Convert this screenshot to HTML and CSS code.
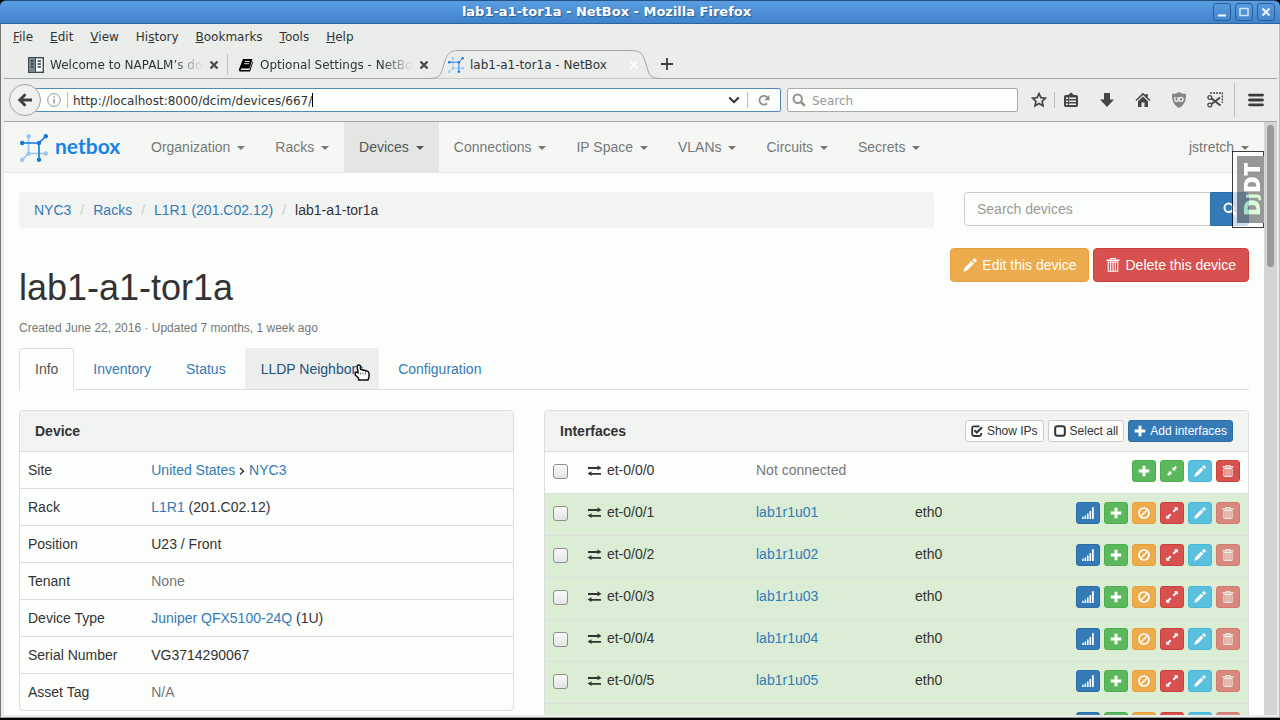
FILE: index.html
```
<!DOCTYPE html>
<html lang="en">
<head>
    <meta charset="UTF-8">
    <meta name="viewport" content="width=device-width, initial-scale=1.0">
    <title>lab1-a1-tor1a - NetBox</title>
    <link rel="stylesheet" href="styles.css">
</head>
<body>
    <svg class="sprite" aria-hidden="true">
        <symbol id="plus" viewBox="0 0 12 12"><path d="M4.500.7h3v3.800h3.800v3H7.500v3.800h-3V7.500H.7v-3h3.800z"/></symbol>
        <symbol id="pencil" viewBox="0 0 12 12"><path d="M.3 11.700l1-3.200 5.900-5.900 2.200 2.200-5.900 5.900zM8 1.800L9.300.5c.4-.4.8-.4 1.200 0l1 1c.4.4.4.8 0 1.200L10.200 4z"/></symbol>
        <symbol id="trash" viewBox="0 0 12 12"><path d="M.5 1.300h3.200V0h4.600v1.300h3.200v1.300H.5zM4.700.8v.6h2.600V.8z" fill-rule="evenodd"/><path d="M1.900 3.500h8.200v7.900H1.900zM4 3.500v8M6 3.500v8M8 3.500v8" fill="none" stroke="currentColor" stroke-width=".9"/></symbol>
        <symbol id="signal" viewBox="0 0 12 12"><path d="M.2 9.700h1.600V12H.2zM2.600 8.600h1.600V12H2.600zM5 6.500h1.600V12H5zM7.500 4h1.600v8H7.500zM10 .3h1.800V12H10z"/></symbol>
        <symbol id="ban" viewBox="0 0 12 12"><path d="M3 9l6-6" fill="none" stroke="currentColor" stroke-width="1.600"/><circle cx="6" cy="6" r="5" fill="none" stroke="currentColor" stroke-width="1.700"/></symbol>
        <symbol id="expand" viewBox="0 0 12 12"><path d="M8 .2h3.800V4l-1.200-1.200L8 5.400 6.600 4l2.600-2.600zM.2 8l1.200 1.200L4 6.600 5.400 8l-2.600 2.600L4 11.800H.2z"/></symbol>
        <symbol id="shrink" viewBox="0 0 12 12"><path d="M6.500 2.200v3.300h3.300L8.900 4.600l2-2-1.500-1.500-2 2zM5.500 9.800V6.500H2.200l.9.9-2 2 1.500 1.500 2-2z"/></symbol>
        <symbol id="transfer" viewBox="0 0 15 12"><path d="M1 3h9.500V1.300L14.500 4l-4 2.200V5H1zM14 9H4.500V7.300L.5 9.500l4 2.500v-1.200H14z"/></symbol>
        <symbol id="check" viewBox="0 0 12 12"><path d="M8.500 1.400H3A1.800 1.800 0 0 0 1.200 3.200v6A1.800 1.800 0 0 0 3 11h5.400a1.800 1.800 0 0 0 1.800-1.800V8" fill="none" stroke="currentColor" stroke-width="1.800"/><path d="M3.500 5.200l2.300 2.300 5.300-5.300" fill="none" stroke="currentColor" stroke-width="2"/></symbol>
        <symbol id="uncheck" viewBox="0 0 12 12"><rect x="1.200" y="1.200" width="9.600" height="9.600" rx="2" fill="none" stroke="currentColor" stroke-width="2"/></symbol>
        <symbol id="mag" viewBox="0 0 14 14"><circle cx="5.700" cy="5.700" r="4.200" fill="none" stroke="currentColor" stroke-width="2"/><path d="M8.800 8.800l4 4" stroke="currentColor" stroke-width="2.600"/></symbol>
        <symbol id="netbox" viewBox="0 0 28 28">
            <g fill="#9bc5f2"><path d="M8.500 3v16.500H26M8.500 19.500L2 26" fill="none" stroke="#9bc5f2" stroke-width="1.600"/><circle cx="8.700" cy="2.300" r="2.200"/><circle cx="8.700" cy="19.500" r="2.200"/><circle cx="25.800" cy="19.500" r="2.200"/><circle cx="2.200" cy="25.800" r="2.200"/></g>
            <g fill="#1479dc"><path d="M2 9h17v17M19 9l7-7" fill="none" stroke="#1479dc" stroke-width="1.600"/><circle cx="2.200" cy="9" r="2.200"/><circle cx="19" cy="9" r="2.200"/><circle cx="25.800" cy="2.200" r="2.200"/><circle cx="19" cy="25.800" r="2.200"/></g>
        </symbol>
        <symbol id="close" viewBox="0 0 10 10"><path d="M1.500 1.500l7 7M8.500 1.500l-7 7" fill="none" stroke="currentColor" stroke-width="2.400"/></symbol>
    </svg>

    <div class="window">
        <header class="titlebar">
            <span class="window-title">lab1-a1-tor1a - NetBox - Mozilla Firefox</span>
            <div class="window-buttons">
                <button aria-label="Minimize"><svg viewBox="0 0 16 16"><path d="M4 11.500h8" stroke="#fff" stroke-width="2"/></svg></button>
                <button aria-label="Maximize"><svg viewBox="0 0 16 16"><path d="M4 4.500h8v7H4z" fill="none" stroke="#cfe4f9" stroke-width="1.600"/></svg></button>
                <button aria-label="Close"><svg viewBox="0 0 16 16"><path d="M4.500 4.500l7 7M11.500 4.500l-7 7" stroke="#e9f3fd" stroke-width="2.200"/></svg></button>
            </div>
        </header>

        <div class="frame">
            <div class="menubar">
                <button><u>F</u>ile</button>
                <button><u>E</u>dit</button>
                <button><u>V</u>iew</button>
                <button>Hi<u>s</u>tory</button>
                <button><u>B</u>ookmarks</button>
                <button><u>T</u>ools</button>
                <button><u>H</u>elp</button>
            </div>

            <div class="tabstrip">
                <div class="tab">
                    <svg class="favicon" viewBox="0 0 16 16"><rect x=".7" y=".7" width="14.600" height="14.600" fill="#fff" stroke="#3c494d" stroke-width="1.400"/><path d="M1 1h6v14H1z" fill="#75898f"/><path d="M7.500 1v14" stroke="#3c494d"/><path d="M3 4h2.500M3 7h2.500M3 10h2.500M9.500 4H13M9.500 7H13M9.500 10H13" stroke="#2c383c" stroke-width="1.400"/></svg>
                    <span class="tab-label faded">Welcome to NAPALM’s do</span>
                    <button class="tab-close" aria-label="Close tab"><svg><use href="#close"/></svg></button>
                </div>
                <div class="tab divided">
                    <svg class="favicon" viewBox="0 0 16 16"><path d="M5 2h9.500l-3 9.500H3.500L2.500 13h9l3-8.500.6.800-3 9.200H2.300C1 14.500.6 13 1.200 11.800z" fill="#000"/><path d="M6.700 4.500h5M6 6.700h5" stroke="#ddd"/></svg>
                    <span class="tab-label faded">Optional Settings - NetBo</span>
                    <button class="tab-close" aria-label="Close tab"><svg><use href="#close"/></svg></button>
                </div>
                <div class="tab active">
                    <svg class="tab-shape" viewBox="0 0 232 29" preserveAspectRatio="none"><path d="M0 28.500C12 28.500 12 24 15 14S20 .5 30 .5H202C212 .5 214 4 217 14S220 28.500 232 28.500" fill="#ebedea" stroke="#a3a5a2"/></svg>
                    <svg class="favicon"><use href="#netbox"/></svg>
                    <span class="tab-label">lab1-a1-tor1a - NetBox</span>
                    <button class="tab-close light" aria-label="Close tab"><svg><use href="#close"/></svg></button>
                </div>
                <button class="new-tab" aria-label="New tab"><svg viewBox="0 0 12 12"><path d="M6 0v12M0 6h12" stroke="#3c3e3b" stroke-width="1.800"/></svg></button>
            </div>

            <div class="toolbar">
                <button class="back" aria-label="Back"><svg viewBox="0 0 16 16"><path d="M15 8H3M8.500 2.200L2.700 8l5.800 5.800" fill="none" stroke="#3f4240" stroke-width="2.800"/></svg></button>
                <div class="urlbar">
                    <svg class="info" viewBox="0 0 14 14"><circle cx="7" cy="7" r="6.300" fill="none" stroke="#969896"/><path d="M7 6v4.500M7 3.300v1.500" stroke="#969896" stroke-width="1.500"/></svg>
                    <span class="line"></span>
                    <input class="url" type="text" size="36" aria-label="Address" value="http://localhost:8000/dcim/devices/667/">
                    <span class="text-caret"></span>
                    <button class="history" aria-label="Show history"><svg viewBox="0 0 12 12"><path d="M1.300 3.500L6 8.200l4.700-4.700" fill="none" stroke="#2d2f2d" stroke-width="2"/></svg></button>
                    <span class="line"></span>
                    <button class="reload" aria-label="Reload"><svg viewBox="0 0 12 12"><path d="M9 9.300A4.400 4.400 0 1 1 9.500 3.700" fill="none" stroke="#8f928f" stroke-width="1.800"/><path d="M11.500.8v5.400H6.200z" fill="#8f928f"/></svg></button>
                </div>
                <label class="searchbar">
                    <svg><use href="#mag"/></svg>
                    <input type="text" placeholder="Search" aria-label="Search">
                </label>
                <button class="tool star" aria-label="Bookmark"><svg viewBox="0 0 16 16"><path d="M8 1.600l1.900 4.100 4.500.5-3.300 3.100.9 4.500L8 11.500l-4 2.300.9-4.500L1.600 6.200l4.500-.5z" fill="none" stroke="#434643" stroke-width="1.700"/></svg></button>
                <span class="line"></span>
                <div class="tool-group">
                    <button class="tool" aria-label="Show bookmarks"><svg viewBox="0 0 16 16"><path d="M2.800 3h10.400A1.800 1.800 0 0 1 15 4.800v8.400a1.800 1.800 0 0 1-1.800 1.800H2.800A1.800 1.800 0 0 1 1 13.200V4.800A1.800 1.800 0 0 1 2.800 3zM5 3L8 .5 11 3z" fill="#434643"/><path d="M3 6.200h2M6 6.200h7M3 9.200h2M6 9.200h7M3 12.200h2M6 12.200h7" stroke="#ebedea" stroke-width="1.500"/></svg></button>
                    <button class="tool" aria-label="Downloads"><svg viewBox="0 0 16 16"><path d="M5 1h6v6.500h4L8 15 1 7.500h4z" fill="#434643"/></svg></button>
                    <button class="tool" aria-label="Home"><svg viewBox="0 0 16 16"><path d="M8 .8l2.500 2.400V2h2.200v3.400L15.500 8l-1 1L8 3 1.500 9l-1-1z" fill="#434643"/><path d="M3 9.200l5-4.600 5 4.600V15H9.500v-4.500h-3V15H3z" fill="#434643"/></svg></button>
                    <button class="tool" aria-label="uBlock"><svg viewBox="0 0 16 16"><path d="M8 0c2 1.300 4 1.800 7 1.800 0 6.500-1 11-7 14.200C2 12.800 1 8.300 1 1.800 4 1.800 6 1.300 8 0z" fill="#858785"/><path d="M4 5v3q0 1.500 1.500 1.500T7 8V5M7 8.500V5" fill="none" stroke="#f4f4f4" stroke-width="1.300"/><circle cx="10" cy="7.300" r="2" fill="none" stroke="#f4f4f4" stroke-width="1.300"/></svg></button>
                    <button class="tool" aria-label="Screenshot"><svg viewBox="0 0 16 16"><path d="M3 1h12.500v10" fill="none" stroke="#434643" stroke-width="1.600" stroke-dasharray="2 1"/><path d="M4.500 6.500l9 7M4.500 12L13 5.500" stroke="#434643" stroke-width="1.900"/><circle cx="2.800" cy="5.500" r="1.900" fill="none" stroke="#434643" stroke-width="1.300"/><circle cx="2.800" cy="13" r="1.900" fill="none" stroke="#434643" stroke-width="1.300"/></svg></button>
                </div>
                <span class="line tall"></span>
                <button class="tool menu" aria-label="Open menu"><svg viewBox="0 0 16 16"><path d="M1.500 3.200h13M1.500 8h13M1.500 12.800h13" stroke="#3c3e3b" stroke-width="2.800" stroke-linecap="round"/></svg></button>
            </div>

            <div class="viewport">
                <div class="page">
                    <nav class="navbar">
                        <a class="brand" href="#"><svg><use href="#netbox"/></svg><span>netbox</span></a>
                        <a class="nav-link" href="#">Organization <span class="caret"></span></a>
                        <a class="nav-link" href="#">Racks <span class="caret"></span></a>
                        <a class="nav-link active" href="#">Devices <span class="caret"></span></a>
                        <a class="nav-link" href="#">Connections <span class="caret"></span></a>
                        <a class="nav-link" href="#">IP Space <span class="caret"></span></a>
                        <a class="nav-link" href="#">VLANs <span class="caret"></span></a>
                        <a class="nav-link" href="#">Circuits <span class="caret"></span></a>
                        <a class="nav-link" href="#">Secrets <span class="caret"></span></a>
                        <a class="nav-link right" href="#">jstretch <span class="caret"></span></a>
                    </nav>

                    <main class="container">
                        <div class="top-row">
                            <ol class="breadcrumb">
                                <li><a href="#">NYC3</a></li>
                                <li><a href="#">Racks</a></li>
                                <li><a href="#">L1R1 (201.C02.12)</a></li>
                                <li>lab1-a1-tor1a</li>
                            </ol>
                            <form class="search">
                                <input type="text" placeholder="Search devices" aria-label="Search devices">
                                <button type="button" aria-label="Search"><svg><use href="#mag"/></svg></button>
                            </form>
                        </div>

                        <div class="device-head">
                            <div>
                                <h1>lab1-a1-tor1a</h1>
                                <p class="meta">Created June 22, 2016 · Updated 7 months, 1 week ago</p>
                            </div>
                            <div class="actions">
                                <button class="btn warning"><svg><use href="#pencil"/></svg> Edit this device</button>
                                <button class="btn danger"><svg><use href="#trash"/></svg> Delete this device</button>
                            </div>
                        </div>

                        <div class="tabs">
                            <a class="active" href="#">Info</a>
                            <a href="#">Inventory</a>
                            <a href="#">Status</a>
                            <a class="hover" href="#">LLDP Neighbors<svg class="pointer" viewBox="0 0 16 17"><path d="M4.500 1C6 1 6.500 2 6.500 3v2.500h2l.5.800h2l.5.700H13q2 .5 2 2.500V13l-1 3H4.500v-2L1.200 11V8.200h2L4.200 9 3.200 3C3 2 3.500 1 4.500 1z" fill="#fff" stroke="#111" stroke-width="1.500" stroke-linejoin="round"/><path d="M6.500 8.500v2M9 8.500v2M11.500 8.500v2" stroke="#777"/></svg></a>
                            <a href="#">Configuration</a>
                        </div>

                        <div class="panels">
                            <section class="panel">
                                <div class="panel-heading"><strong>Device</strong></div>
                                <table class="attrs">
                                    <tr><td>Site</td><td><a href="#">United States</a> <svg class="angle" viewBox="0 0 6 10"><path d="M1 2l3.500 3.200L1 8.500" fill="none" stroke="#333" stroke-width="1.400"/></svg> <a href="#">NYC3</a></td></tr>
                                    <tr><td>Rack</td><td><a href="#">L1R1</a> (201.C02.12)</td></tr>
                                    <tr><td>Position</td><td>U23 / Front</td></tr>
                                    <tr><td>Tenant</td><td class="muted">None</td></tr>
                                    <tr><td>Device Type</td><td><a href="#">Juniper QFX5100-24Q</a> (1U)</td></tr>
                                    <tr><td>Serial Number</td><td>VG3714290067</td></tr>
                                    <tr><td>Asset Tag</td><td class="muted">N/A</td></tr>
                                </table>
                            </section>

                            <section class="panel">
                                <div class="panel-heading">
                                    <strong>Interfaces</strong>
                                    <div class="btn-row">
                                        <button class="btn xs default"><svg><use href="#check"/></svg> Show IPs</button>
                                        <button class="btn xs default"><svg><use href="#uncheck"/></svg> Select all</button>
                                        <button class="btn xs primary"><svg><use href="#plus"/></svg> Add interfaces</button>
                                    </div>
                                </div>
                                <table class="interfaces">
                                    <colgroup><col class="col-check"><col class="col-name"><col class="col-peer"><col></colgroup>
                                    <tr>
                                        <td><input type="checkbox" aria-label="et-0/0/0"></td>
                                        <td><svg class="transfer"><use href="#transfer"/></svg> et-0/0/0</td>
                                        <td class="muted">Not connected</td>
                                        <td><div class="cell"><span></span><div class="btn-row">
                                            <button class="btn xs success" aria-label="Add IP"><svg><use href="#plus"/></svg></button>
                                            <button class="btn xs success" aria-label="Connect"><svg><use href="#shrink"/></svg></button>
                                            <button class="btn xs info-btn" aria-label="Edit"><svg><use href="#pencil"/></svg></button>
                                            <button class="btn xs danger" aria-label="Delete"><svg><use href="#trash"/></svg></button>
                                        </div></div></td>
                                    </tr>
                                    <tr class="connected">
                                        <td><input type="checkbox" aria-label="et-0/0/1"></td>
                                        <td><svg class="transfer"><use href="#transfer"/></svg> et-0/0/1</td>
                                        <td><a href="#">lab1r1u01</a></td>
                                        <td><div class="cell"><span>eth0</span><div class="btn-row">
                                            <button class="btn xs primary" aria-label="Graphs"><svg><use href="#signal"/></svg></button>
                                            <button class="btn xs success" aria-label="Add IP"><svg><use href="#plus"/></svg></button>
                                            <button class="btn xs warning" aria-label="Mark planned"><svg><use href="#ban"/></svg></button>
                                            <button class="btn xs danger" aria-label="Disconnect"><svg><use href="#expand"/></svg></button>
                                            <button class="btn xs info-btn" aria-label="Edit"><svg><use href="#pencil"/></svg></button>
                                            <button class="btn xs danger" aria-label="Delete" disabled><svg><use href="#trash"/></svg></button>
                                        </div></div></td>
                                    </tr>
                                    <tr class="connected">
                                        <td><input type="checkbox" aria-label="et-0/0/2"></td>
                                        <td><svg class="transfer"><use href="#transfer"/></svg> et-0/0/2</td>
                                        <td><a href="#">lab1r1u02</a></td>
                                        <td><div class="cell"><span>eth0</span><div class="btn-row">
                                            <button class="btn xs primary" aria-label="Graphs"><svg><use href="#signal"/></svg></button>
                                            <button class="btn xs success" aria-label="Add IP"><svg><use href="#plus"/></svg></button>
                                            <button class="btn xs warning" aria-label="Mark planned"><svg><use href="#ban"/></svg></button>
                                            <button class="btn xs danger" aria-label="Disconnect"><svg><use href="#expand"/></svg></button>
                                            <button class="btn xs info-btn" aria-label="Edit"><svg><use href="#pencil"/></svg></button>
                                            <button class="btn xs danger" aria-label="Delete" disabled><svg><use href="#trash"/></svg></button>
                                        </div></div></td>
                                    </tr>
                                    <tr class="connected">
                                        <td><input type="checkbox" aria-label="et-0/0/3"></td>
                                        <td><svg class="transfer"><use href="#transfer"/></svg> et-0/0/3</td>
                                        <td><a href="#">lab1r1u03</a></td>
                                        <td><div class="cell"><span>eth0</span><div class="btn-row">
                                            <button class="btn xs primary" aria-label="Graphs"><svg><use href="#signal"/></svg></button>
                                            <button class="btn xs success" aria-label="Add IP"><svg><use href="#plus"/></svg></button>
                                            <button class="btn xs warning" aria-label="Mark planned"><svg><use href="#ban"/></svg></button>
                                            <button class="btn xs danger" aria-label="Disconnect"><svg><use href="#expand"/></svg></button>
                                            <button class="btn xs info-btn" aria-label="Edit"><svg><use href="#pencil"/></svg></button>
                                            <button class="btn xs danger" aria-label="Delete" disabled><svg><use href="#trash"/></svg></button>
                                        </div></div></td>
                                    </tr>
                                    <tr class="connected">
                                        <td><input type="checkbox" aria-label="et-0/0/4"></td>
                                        <td><svg class="transfer"><use href="#transfer"/></svg> et-0/0/4</td>
                                        <td><a href="#">lab1r1u04</a></td>
                                        <td><div class="cell"><span>eth0</span><div class="btn-row">
                                            <button class="btn xs primary" aria-label="Graphs"><svg><use href="#signal"/></svg></button>
                                            <button class="btn xs success" aria-label="Add IP"><svg><use href="#plus"/></svg></button>
                                            <button class="btn xs warning" aria-label="Mark planned"><svg><use href="#ban"/></svg></button>
                                            <button class="btn xs danger" aria-label="Disconnect"><svg><use href="#expand"/></svg></button>
                                            <button class="btn xs info-btn" aria-label="Edit"><svg><use href="#pencil"/></svg></button>
                                            <button class="btn xs danger" aria-label="Delete" disabled><svg><use href="#trash"/></svg></button>
                                        </div></div></td>
                                    </tr>
                                    <tr class="connected">
                                        <td><input type="checkbox" aria-label="et-0/0/5"></td>
                                        <td><svg class="transfer"><use href="#transfer"/></svg> et-0/0/5</td>
                                        <td><a href="#">lab1r1u05</a></td>
                                        <td><div class="cell"><span>eth0</span><div class="btn-row">
                                            <button class="btn xs primary" aria-label="Graphs"><svg><use href="#signal"/></svg></button>
                                            <button class="btn xs success" aria-label="Add IP"><svg><use href="#plus"/></svg></button>
                                            <button class="btn xs warning" aria-label="Mark planned"><svg><use href="#ban"/></svg></button>
                                            <button class="btn xs danger" aria-label="Disconnect"><svg><use href="#expand"/></svg></button>
                                            <button class="btn xs info-btn" aria-label="Edit"><svg><use href="#pencil"/></svg></button>
                                            <button class="btn xs danger" aria-label="Delete" disabled><svg><use href="#trash"/></svg></button>
                                        </div></div></td>
                                    </tr>
                                    <tr class="connected">
                                        <td></td>
                                        <td></td>
                                        <td></td>
                                        <td><div class="cell"><span></span><div class="btn-row">
                                            <button class="btn xs primary" aria-label="Graphs"><svg><use href="#signal"/></svg></button>
                                            <button class="btn xs success" aria-label="Add IP"><svg><use href="#plus"/></svg></button>
                                            <button class="btn xs warning" aria-label="Mark planned"><svg><use href="#ban"/></svg></button>
                                            <button class="btn xs danger" aria-label="Disconnect"><svg><use href="#expand"/></svg></button>
                                            <button class="btn xs info-btn" aria-label="Edit"><svg><use href="#pencil"/></svg></button>
                                            <button class="btn xs danger" aria-label="Delete" disabled><svg><use href="#trash"/></svg></button>
                                        </div></div></td>
                                    </tr>
                                </table>
                            </section>
                        </div>
                    </main>
                    <a class="debug-handle" href="#"><span><b>D<small>J</small></b>DT</span></a>
                </div>
                <div class="scrollbar"><div class="thumb"></div></div>
            </div>
        </div>
    </div>
</body>
</html>
```
FILE: styles.css
```
* {
    box-sizing: border-box;
}
body {
    margin: 0;
    background: #000;
    color: #333;
    font-family: "Liberation Sans", Arial, sans-serif;
    font-size: 14px;
    line-height: 20px;
}
button, input {
    font: inherit;
    color: inherit;
}
button {
    display: flex;
    align-items: center;
    justify-content: center;
    padding: 0;
    border: none;
    background: none;
}
a {
    color: #337ab7;
    text-decoration: none;
}
svg {
    display: block;
    fill: currentColor;
    flex: none;
}
.sprite {
    display: none;
}

/* window frame */
.window {
    display: flex;
    flex-direction: column;
    height: 100vh;
    padding-bottom: 2px;
}
.titlebar {
    display: flex;
    align-items: center;
    flex: none;
    height: 24px;
    padding-right: 5px;
    background: linear-gradient(#5b9de0, #3f83cb);
    border-top: 1px solid #1f4f80;
    border-bottom: 1px solid #2c659f;
    border-radius: 6px 6px 0 0;
    color: #fff;
    font-family: "DejaVu Sans", sans-serif;
    font-size: 13px;
    font-weight: bold;
}
.window-title {
    flex: 1;
    text-align: center;
    text-shadow: 1px 1px 1px #2b5f95;
}
.window-buttons {
    display: flex;
    gap: 4px;
}
.window-buttons button {
    width: 18px;
    height: 18px;
    border: 1px solid #275f9b;
    border-radius: 3px;
}
.window-buttons svg {
    width: 16px;
    height: 16px;
}
.frame {
    display: flex;
    flex-direction: column;
    flex: 1;
    min-height: 0;
    padding: 0 2px 2px 3px;
    background: #ebedea;
    border-left: 1px solid #777;
    border-right: 1px solid #bbb;
    border-bottom: 1px solid #999;
    color: #2e3436;
    font-family: "DejaVu Sans", sans-serif;
    font-size: 12px;
}
.menubar {
    display: flex;
    gap: 1px;
    height: 26px;
}
.menubar button {
    display: block;
    padding: 0 8px;
}
.menubar button:first-child {
    padding-left: 9px;
}

/* browser tabs */
.tabstrip {
    display: flex;
    flex: none;
    height: 29px;
    padding-left: 13px;
    border-bottom: 1px solid #a3a5a2;
}
.tab {
    position: relative;
    display: flex;
    align-items: center;
    width: 210px;
    height: 29px;
    padding: 0 8px 0 11px;
}
.tab.active {
    z-index: 1;
}
.divided::before {
    content: "";
    position: absolute;
    left: 0;
    height: 21px;
    border-left: 1px solid #bfc1be;
}
.tab-shape {
    position: absolute;
    left: -8px;
    top: 0;
    width: 232px;
    height: 29px;
}
.favicon {
    position: relative;
    width: 16px;
    height: 16px;
    margin-right: 6px;
}
.tab-label {
    position: relative;
    flex: 1;
    white-space: nowrap;
}
.faded {
    -webkit-mask-image: linear-gradient(to right, #000 80%, transparent);
    mask-image: linear-gradient(to right, #000 80%, transparent);
}
.tab-close {
    position: relative;
    margin-left: 6px;
    color: #4a4c49;
}
.tab-close svg {
    width: 10px;
    height: 10px;
}
.tab-close.light {
    color: #fbfcfb;
}
.new-tab {
    width: 34px;
    margin-left: 3px;
}
.new-tab svg {
    width: 12px;
    height: 12px;
}

/* address bar and tool buttons */
.toolbar {
    display: flex;
    align-items: center;
    flex: none;
    height: 43px;
    padding-left: 5px;
    border-bottom: 1px solid #a3a5a2;
}
.back {
    position: relative;
    z-index: 1;
    width: 32px;
    height: 32px;
    background: #f0f1ef;
    border: 1px solid #a0a29f;
    border-radius: 50%;
}
.back svg {
    width: 16px;
    height: 16px;
}
.urlbar, .searchbar {
    display: flex;
    align-items: center;
    height: 24px;
    background: #fcfefc;
    border: 1px solid #a9aba8;
    border-radius: 2px;
}
.urlbar {
    flex: 1;
    margin: 0 6px 0 -6px;
    padding-left: 11px;
    border-color: #5288b4;
}
.urlbar input, .searchbar input {
    min-width: 0;
    padding: 1px 0 0;
    border: none;
    outline: none;
    background: none;
}
.url {
    margin-left: 5px;
    field-sizing: content;
}
.info {
    width: 14px;
    height: 14px;
    margin-right: 6px;
}
.line {
    height: 16px;
    border-left: 1px solid #bdbfbc;
}
.text-caret {
    height: 14px;
    border-left: 1px solid #000;
}
.history {
    margin-left: auto;
    margin-right: 7px;
}
.history svg, .reload svg {
    width: 12px;
    height: 12px;
}
.reload {
    width: 32px;
}
.searchbar {
    width: 231px;
    padding-left: 4px;
    gap: 6px;
    color: #8f928f;
}
.searchbar svg {
    width: 14px;
    height: 14px;
}
.searchbar input {
    flex: 1;
}
input::placeholder {
    color: #999;
    opacity: 1;
}
.tool-group {
    display: flex;
    gap: 4px;
    padding: 0 3px 0 0;
}
.tool {
    width: 32px;
    height: 32px;
}
.tool svg {
    width: 16px;
    height: 16px;
}
.star {
    width: 30px;
    margin-left: 6px;
}
.line.tall {
    height: 34px;
}
.menu {
    width: 42px;
}

/* page */
.viewport {
    display: flex;
    flex: 1;
    min-height: 0;
}
.page {
    position: relative;
    flex: 1;
    overflow: hidden;
    background: #fcfefc;
    color: #333;
    font-family: "Liberation Sans", Arial, sans-serif;
    font-size: 14px;
}
.scrollbar {
    width: 13px;
    padding: 3px;
    background: #d3d5d3;
}
.thumb {
    height: 142px;
    background: #989a98;
    border-radius: 4px;
}
.navbar {
    display: flex;
    height: 51px;
    background: #f5f7f5;
    border-bottom: 1px solid #e3e5e3;
}
.brand {
    display: flex;
    align-items: center;
    gap: 7px;
    width: 132px;
    padding: 2px 0 0 16px;
    color: #1683e6;
    font-family: Lato, sans-serif;
    font-size: 21px;
    font-weight: bold;
}
.brand svg {
    width: 28px;
    height: 28px;
}
.brand span {
    padding-bottom: 4px;
}
.nav-link {
    padding: 15px;
    color: #777;
    white-space: nowrap;
}
.nav-link.active {
    background: #e4e6e4;
    color: #555;
}
.nav-link.right {
    margin-left: auto;
}
.caret {
    display: inline-block;
    margin-left: 3px;
    vertical-align: middle;
    border-top: 4px solid;
    border-left: 4px solid transparent;
    border-right: 4px solid transparent;
}
.container {
    padding: 19px 15px 0;
}
.top-row {
    display: grid;
    grid-template-columns: 915fr 285fr;
    gap: 30px;
    align-items: start;
    margin-bottom: 20px;
}
.breadcrumb {
    display: flex;
    margin: 0;
    padding: 8px 15px;
    background: #f2f4f2;
    border-radius: 4px;
    list-style: none;
}
.breadcrumb li + li::before {
    content: "/";
    padding: 0 9px;
    color: #ccc;
}
.search {
    display: flex;
    height: 34px;
}
.search input {
    flex: 1;
    min-width: 0;
    padding: 6px 12px;
    border: 1px solid #ccc;
    border-right: none;
    border-radius: 4px 0 0 4px;
    background: #fcfefc;
}
.search button {
    width: 39px;
    background: #337ab7;
    border: 1px solid #2e6da4;
    border-radius: 0 4px 4px 0;
    color: #fff;
}
.search svg {
    width: 14px;
    height: 14px;
}
.device-head {
    display: flex;
    justify-content: space-between;
    align-items: flex-start;
}
h1 {
    margin: 20px 0 10px;
    font-size: 36px;
    font-weight: normal;
    line-height: 40px;
}
.meta {
    margin: 0 0 10px;
    color: #777;
    font-size: 12px;
}
.actions, .btn-row {
    display: flex;
    gap: 4px;
}
.btn {
    gap: 5px;
    height: 34px;
    padding: 0 12px;
    border: 1px solid;
    border-radius: 4px;
    color: #fff;
    white-space: nowrap;
}
.btn svg {
    width: 14px;
    height: 14px;
}
.btn.xs {
    height: 22px;
    padding: 0 5px;
    border-radius: 3px;
    font-size: 12px;
    gap: 4px;
}
.btn.xs svg {
    width: 12px;
    height: 12px;
}
.btn.default {
    background: #fcfefc;
    border-color: #ccc;
    color: #333;
}
.btn.primary {
    background: #337ab7;
    border-color: #2e6da4;
}
.btn.success {
    background: #5cb85c;
    border-color: #4cae4c;
}
.btn.info-btn {
    background: #5bc0de;
    border-color: #46b8da;
}
.btn.warning {
    background: #ecab4c;
    border-color: #e9a03a;
}
.btn.danger {
    background: #d7524e;
    border-color: #cb403b;
}
.btn:disabled {
    opacity: 0.65;
}
.tabs {
    display: flex;
    gap: 3px;
    margin-bottom: 20px;
    border-bottom: 1px solid #ddd;
}
.tabs a {
    position: relative;
    margin-bottom: -1px;
    padding: 10px 15px;
    border: 1px solid transparent;
    border-radius: 4px 4px 0 0;
}
.tabs .active {
    background: #fcfefc;
    border-color: #ddd #ddd #fcfefc;
    color: #555;
}
.tabs .hover {
    background: #eceeec;
    border-bottom-color: #ddd;
    color: #23527c;
}
.pointer {
    position: absolute;
    right: 8px;
    top: 15px;
    width: 16px;
    height: 17px;
}
.panels {
    display: grid;
    grid-template-columns: 495fr 705fr;
    gap: 30px;
    align-items: start;
}
.panel {
    border: 1px solid #ddd;
    border-radius: 4px;
    overflow: hidden;
}
.panel-heading {
    display: flex;
    align-items: center;
    justify-content: space-between;
    height: 40px;
    padding: 0 15px;
    background: #f2f4f2;
}
table {
    width: 100%;
    border-collapse: separate;
    border-spacing: 0;
    table-layout: fixed;
}
td {
    padding: 8px;
    border-top: 1px solid #ddd;
    vertical-align: top;
}
.attrs td:first-child {
    width: 25%;
}
.angle {
    display: inline-block;
    width: 6px;
    height: 10px;
    vertical-align: -1px;
}
.muted {
    color: #777;
}
.interfaces tr {
    height: 42px;
}
.connected {
    background: #dbeed5;
}
.col-check {
    width: 34px;
}
.col-name {
    width: 169px;
}
.col-peer {
    width: 159px;
}
.transfer {
    display: inline-block;
    width: 15px;
    height: 12px;
    margin-right: 1px;
    vertical-align: -1px;
}
.cell {
    display: flex;
    align-items: flex-start;
    justify-content: space-between;
}
.interfaces input {
    display: block;
    appearance: none;
    width: 15px;
    height: 15px;
    margin: 4px 0 0;
    background: linear-gradient(#f9faf9, #e3e5e3);
    border: 1px solid #8e908e;
    border-radius: 3px;
}

/* debug toolbar handle */
.debug-handle {
    position: absolute;
    top: 29px;
    right: 0;
    width: 32px;
    height: 77px;
    padding: 4px 0 4px 4px;
    background: #fff;
    border: 1px solid #000;
    color: #fff;
    opacity: 0.75;
}
.debug-handle span {
    display: flex;
    align-items: center;
    justify-content: center;
    width: 27px;
    height: 67px;
    background: #777;
    font-family: "Open Sans", sans-serif;
    font-size: 23px;
    font-weight: 800;
    writing-mode: vertical-rl;
    transform: rotate(180deg);
}
.debug-handle b {
    color: #cfc;
    font-weight: 800;
}
.debug-handle small {
    font-size: 16px;
}
```
